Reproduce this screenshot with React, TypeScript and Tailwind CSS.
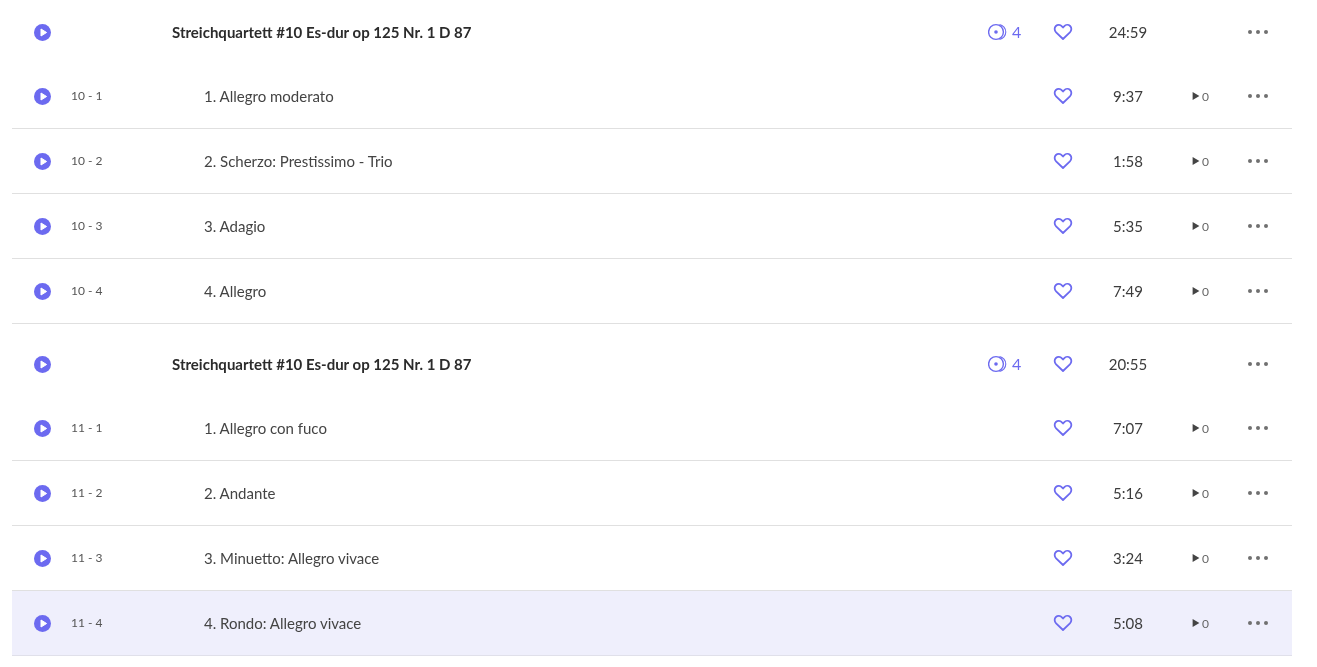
import * as React from "react"

type Track = { no: string; title: string; time: string; active?: boolean }
type Work = { title: string; time: string; tracks: Track[] }

const works: Work[] = [
  {
    title: "Streichquartett #10 Es-dur op 125 Nr. 1 D 87",
    time: "24:59",
    tracks: [
      { no: "10 - 1", title: "1. Allegro moderato", time: "9:37" },
      { no: "10 - 2", title: "2. Scherzo: Prestissimo - Trio", time: "1:58" },
      { no: "10 - 3", title: "3. Adagio", time: "5:35" },
      { no: "10 - 4", title: "4. Allegro", time: "7:49" },
    ],
  },
  {
    title: "Streichquartett #10 Es-dur op 125 Nr. 1 D 87",
    time: "20:55",
    tracks: [
      { no: "11 - 1", title: "1. Allegro con fuco", time: "7:07" },
      { no: "11 - 2", title: "2. Andante", time: "5:16" },
      { no: "11 - 3", title: "3. Minuetto: Allegro vivace", time: "3:24" },
      { no: "11 - 4", title: "4. Rondo: Allegro vivace", time: "5:08", active: true },
    ],
  },
]

function PlayIcon() {
  return (
    <svg width="17" height="17" viewBox="0 0 17 17" className="mt-px block">
      <circle cx="8.5" cy="8.5" r="8.5" fill="#6c6af0" />
      <path d="M7 5 L12.6 8.5 L7 12 Z" fill="#fff" stroke="#fff" strokeWidth="1" strokeLinejoin="round" />
    </svg>
  )
}

function HeartIcon() {
  return (
    <svg width="20" height="18" viewBox="0 0 20 18" fill="none" className="block">
      <path
        d="M10 16 L3.1 9.4 C1.2 7.5 1.2 4.6 2.9 3 C4.6 1.4 7.3 1.6 8.9 3.3 L10 4.5 L11.1 3.3 C12.7 1.6 15.4 1.4 17.1 3 C18.8 4.6 18.8 7.5 16.9 9.4 Z"
        stroke="#6c6af0"
        strokeWidth="1.8"
        strokeLinejoin="round"
      />
    </svg>
  )
}

function DiscIcon() {
  return (
    <svg width="20" height="18" viewBox="0 0 20 18" fill="none" className="block">
      <circle cx="8" cy="9" r="7.4" stroke="#6c6af0" strokeWidth="1.4" />
      <circle cx="8" cy="9" r="1.8" fill="#6c6af0" />
      <path d="M11.5 1.6 A7.5 7.5 0 0 1 11.5 16.4" stroke="#6c6af0" strokeWidth="1.1" />
    </svg>
  )
}

function MoreDots() {
  return (
    <div className="flex items-center gap-[4px]">
      <span className="h-[4px] w-[4px] rounded-full bg-[#707070]" />
      <span className="h-[4px] w-[4px] rounded-full bg-[#707070]" />
      <span className="h-[4px] w-[4px] rounded-full bg-[#707070]" />
    </div>
  )
}

function WorkRow({ work }: { work: Work }) {
  return (
    <div className="flex h-16 items-center">
      <div className="w-[61px] pl-[22px]"><PlayIcon /></div>
      <div className="w-[99px] shrink-0" />
      <div className="flex-1 text-[15px] font-bold text-[#2b2b2b]">{work.title}</div>
      <div className="flex w-[48px] items-center text-[16px] text-[#6c6af0]">
        <DiscIcon />
        <span className="ml-[4px]">4</span>
      </div>
      <div className="flex w-[54px] justify-center"><HeartIcon /></div>
      <div className="w-[76px] text-center text-[15px] text-[#3c3c3c]">{work.time}</div>
      <div className="w-[72px]" />
      <div className="flex w-[40px] justify-center"><MoreDots /></div>
      <div className="w-[14px]" />
    </div>
  )
}

function TrackRow({ track }: { track: Track }) {
  return (
    <div className={track.active ? "flex h-[65px] items-center border-b border-[#e0e0ea] bg-[#efeffc]" : "flex h-[65px] items-center border-b border-[#e0e0e0]"}>
      <div className="w-[61px] pl-[22px]"><PlayIcon /></div>
      <div className="-mt-px w-[131px] shrink-0 -translate-x-[2px] text-[12px] text-[#555]">{track.no}</div>
      <div className="flex-1 text-[15px] text-[#444]">{track.title}</div>
      <div className="flex w-[54px] justify-center"><HeartIcon /></div>
      <div className="w-[76px] text-center text-[15px] text-[#3c3c3c]">{track.time}</div>
      <div className="flex w-[72px] items-center pl-[26px]">
        <svg width="8" height="10" viewBox="0 0 8 10" className="block shrink-0">
          <path d="M0.6 1 L7.4 5 L0.6 9 Z" fill="#444" />
        </svg>
        <span className="ml-[2px] mt-[2px] text-[12px] text-[#666]">0</span>
      </div>
      <div className="flex w-[40px] justify-center"><MoreDots /></div>
      <div className="w-[14px]" />
    </div>
  )
}

export default function App() {
  return (
    <div className="h-[667px] w-[1317px] overflow-hidden pl-[12px] pr-[25px] font-['Lato',sans-serif] will-change-transform">
      {works.map((work, i) => (
        <div key={i} className={i > 0 ? "mt-[8px]" : ""}>
          <WorkRow work={work} />
          {work.tracks.map((t) => (
            <TrackRow key={t.no} track={t} />
          ))}
        </div>
      ))}
    </div>
  )
}
